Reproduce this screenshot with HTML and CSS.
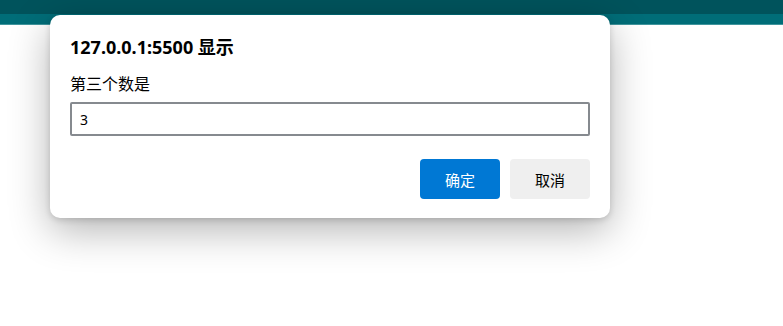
FILE: index.html
```html
<!DOCTYPE html>
<html lang="zh-CN">
<head>
    <meta charset="UTF-8">
    <meta name="viewport" content="width=device-width, initial-scale=1.0">
    <title>prompt</title>
    <link rel="stylesheet" href="styles.css">
</head>
<body>
    <div class="topbar">
        <div class="topbar-dark"></div>
        <div class="topbar-light"></div>
    </div>

    <div class="dialog">
        <h2 class="dialog-title">127.0.0.1:5500 显示</h2>
        <label class="dialog-label" for="answer">第三个数是</label>
        <input class="dialog-input" type="text" id="answer" value="3">
        <div class="dialog-actions">
            <button class="btn btn-ok">确定</button>
            <button class="btn btn-cancel">取消</button>
        </div>
    </div>
</body>
</html>
```

FILE: styles.css
```css
body {
    margin: 0;
    background-color: #fff;
    font-family: "Noto Sans", "Noto Sans CJK SC", sans-serif;
    color: #000;
}

.topbar {
    display: flex;
    flex-direction: column;
}
.topbar-dark {
    height: 14px;
    background-color: #00535c;
}
.topbar-light {
    height: 10px;
    background-color: #006d78;
    border-bottom: 1px solid #3f959d;
}

/* caja del prompt, encima de la barra */
.dialog {
    position: absolute;
    left: 50px;
    top: 15px;
    width: 560px;
    height: 203px;
    box-sizing: border-box;
    padding: 20px 20px 0 20px;
    background: #fff;
    border-radius: 10px;
    box-shadow: 0 12px 40px rgba(0, 0, 0, 0.3), 0 2px 6px rgba(0, 0, 0, 0.15);
}

.dialog-title {
    margin: 0;
    font-size: 18px;
    font-weight: 700;
    line-height: 24px;
}

.dialog-label {
    display: block;
    margin-top: 14px;
    font-size: 16px;
    line-height: 22px;
}

.dialog-input {
    display: block;
    margin-top: 7px;
    width: 100%;
    height: 34px;
    box-sizing: border-box;
    padding: 0 8px;
    border: 2px solid #868a8f;
    border-radius: 2px;
    font-family: "Noto Sans", sans-serif;
    font-size: 14px;
    color: #000;
    outline: none;
}

.dialog-actions {
    display: flex;
    justify-content: flex-end;
    gap: 10px;
    margin-top: 23px;
}

.btn {
    width: 80px;
    height: 40px;
    border: none;
    border-radius: 4px;
    font-family: "Noto Sans CJK SC", sans-serif;
    font-size: 15px;
    cursor: pointer;
}
.btn-ok {
    background-color: #0078d4;
    color: #fff;
}
.btn-cancel {
    background-color: #efefef;
    color: #000;
}
```
